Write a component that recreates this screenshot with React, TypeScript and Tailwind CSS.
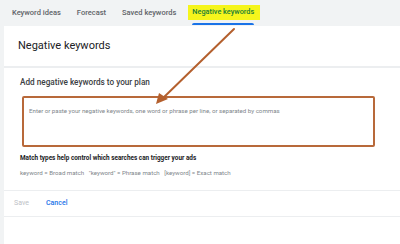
import React from "react";

const tabs = ["Keyword ideas", "Forecast", "Saved keywords"];

export default function App() {
  return (
    <div className="relative w-[400px] h-[244px] overflow-hidden bg-[#f1f3f4] font-['Roboto',sans-serif] flex flex-col">
      {/* Tabs */}
      <div className="h-[26px] flex items-start pl-[8px] gap-[8px] shrink-0">
        {tabs.map((t) => (
          <div key={t} className="h-[26px] px-[4px] flex items-center text-[7.5px] text-[#5f6368] font-medium pb-[1px]">
            {t}
          </div>
        ))}
        <div className="h-[26px] flex flex-col pt-[5px]">
          <div className="h-[15px] bg-[#f5f51c] pl-[4px] pr-[6px] flex items-center text-[7.3px] font-medium text-[#188038]">
            Negative keywords
          </div>
          <div className="mt-[3px] ml-[4px] w-[62px] h-[2px] bg-[#1a73e8] rounded-t" />
        </div>
      </div>

      {/* Card */}
      <div className="flex-1 ml-[4px] bg-white flex flex-col">
        <div className="h-[42px] pl-[14px] flex items-center text-[11px] text-[#202124] border-b-2 border-[#eceef0]">
          Negative keywords
        </div>
        <div className="pl-[16px] pt-[9px] flex flex-col">
          <div className="text-[8.2px] font-medium text-[#3c4043] leading-[11px]">Add negative keywords to your plan</div>
          <div className="mt-[8px] ml-[2px] w-[353px] h-[51px] border-2 border-[#b8693a] rounded-[2px] pl-[5px] pt-[9px] text-[6.15px] text-[#80868b]">
            Enter or paste your negative keywords, one word or phrase per line, or separated by commas
          </div>
          <div className="mt-[7px] text-[6.4px] font-bold text-[#202124] leading-[9px]">
            Match types help control which searches can trigger your ads
          </div>
          <div className="mt-[6px] text-[6.15px] text-[#80868b] leading-[9px] whitespace-pre">
            {'keyword = Broad match   "keyword" = Phrase match   [keyword] = Exact match'}
          </div>
        </div>
        <div className="mt-[12px] border-t border-[#eceef0] h-[26px] flex items-center pl-[10px] gap-[17px] text-[7px]">
          <span className="text-[#bdc1c6]">Save</span>
          <span className="text-[#1a73e8] font-medium">Cancel</span>
        </div>
        <div className="border-t border-[#eceef0]" />
      </div>

      {/* Annotation arrow */}
      <svg className="absolute left-0 top-0 pointer-events-none" width="400" height="244" viewBox="0 0 400 244">
        <line x1="234" y1="29" x2="161" y2="100" stroke="#b4602e" strokeWidth="2" strokeLinecap="round" />
        <polygon points="156,104 159,93 168,99" fill="#b4602e" />
      </svg>
    </div>
  );
}
